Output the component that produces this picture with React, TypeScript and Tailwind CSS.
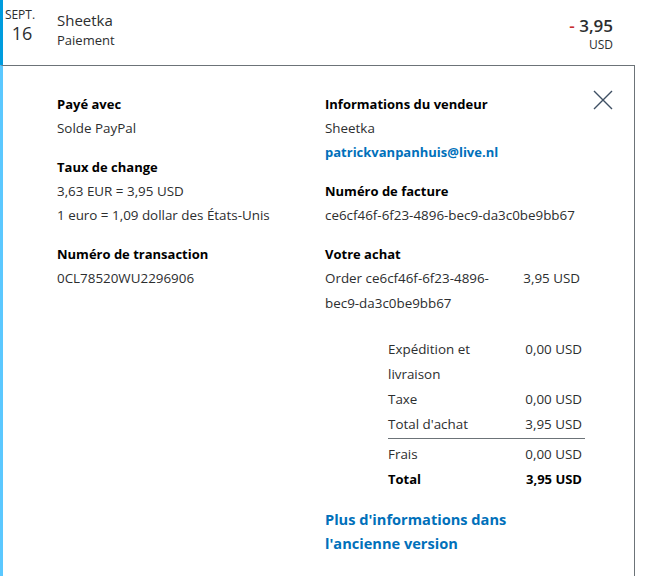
import React from 'react';

const font = { fontFamily: '"Open Sans", "Noto Sans", "Liberation Sans", sans-serif' };

function Section({ title, children }: { title: string; children: React.ReactNode }) {
  return (
    <div className="mb-[15px]">
      <p className="font-bold text-[13px] leading-[24px] text-[#000]">{title}</p>
      {children}
    </div>
  );
}

function Line({ children, className = '' }: { children: React.ReactNode; className?: string }) {
  return <p className={`text-[13.4px] leading-[24px] text-[#2c2e2f] ${className}`}>{children}</p>;
}

const breakdown = [
  { label: 'Expédition et livraison', amount: '0,00 USD' },
  { label: 'Taxe', amount: '0,00 USD' },
];

export default function App() {
  return (
    <div className="w-[646px] min-h-[576px] bg-white" style={font}>
      {/* Transaction row */}
      <div className="flex h-[65px] border-l-[3px] border-[#009cde]">
        <div className="w-[54px] flex flex-col items-center pt-[7px]">
          <span className="text-[12px] leading-[16px] text-[#2c2e2f] -ml-[20px]">SEPT.</span>
          <span className="text-[18px] leading-[20px] font-medium text-[#2c2e2f] -ml-[16px]">16</span>
        </div>
        <div className="flex-1 pt-[9px]">
          <p className="text-[15px] leading-[22px] text-[#2c2e2f]">Sheetka</p>
          <p className="text-[13px] leading-[18px] text-[#2c2e2f]">Paiement</p>
        </div>
        <div className="pr-[33px] pt-[17px] flex flex-col items-end">
          <p className="text-[17px] leading-[17px] font-semibold text-[#2c2e2f]">
            <span className="text-[#c72e2e]">-</span> 3,95
          </p>
          <p className="text-[12px] leading-[14px] mt-[4px] text-[#2c2e2f]">USD</p>
        </div>
      </div>

      {/* Details panel */}
      <div className="relative w-[635px] min-h-[511px] border-l-[3px] border-l-[#5bc8ff] border-t border-t-[#6c7378] border-r border-r-[#6c7378] pl-[54px] pt-[26px]">
        <button className="absolute right-[21px] top-[24px] w-[20px] h-[20px]">
          <svg viewBox="0 0 20 20" className="w-[20px] h-[20px]">
            <path d="M1 1 L19 19 M19 1 L1 19" stroke="#3e4f63" strokeWidth="1.4" fill="none" />
          </svg>
        </button>
        <div className="flex">
          <div className="w-[268px]">
            <Section title="Payé avec">
              <Line>Solde PayPal</Line>
            </Section>
            <Section title="Taux de change">
              <Line>3,63 EUR = 3,95 USD</Line>
              <Line>1 euro = 1,09 dollar des États-Unis</Line>
            </Section>
            <Section title="Numéro de transaction">
              <Line>0CL78520WU2296906</Line>
            </Section>
          </div>
          <div className="flex-1">
            <Section title="Informations du vendeur">
              <Line>Sheetka</Line>
              <p className="text-[13px] leading-[24px] font-bold text-[#0070ba]">patrickvanpanhuis@live.nl</p>
            </Section>
            <Section title="Numéro de facture">
              <Line>ce6cf46f-6f23-4896-bec9-da3c0be9bb67</Line>
            </Section>
            <div>
              <p className="font-bold text-[13px] leading-[24px] text-[#000]">Votre achat</p>
              <div className="flex w-[255px] text-[13.4px] leading-[25px] text-[#2c2e2f]">
                <span className="w-[185px] break-words">Order ce6cf46f-6f23-4896-bec9-da3c0be9bb67</span>
                <span className="flex-1 text-right">3,95 USD</span>
              </div>
            </div>

            <div className="ml-[63px] w-[197px] mt-[21px] text-[13.4px] leading-[25px] text-[#2c2e2f]">
              {breakdown.map((row) => (
                <div key={row.label} className="flex">
                  <span className="w-[125px]">{row.label}</span>
                  <span className="flex-1 text-right pr-[3px]">{row.amount}</span>
                </div>
              ))}
              <div className="flex border-b border-[#6c7378] pb-[1px]">
                <span className="w-[125px]">Total d'achat</span>
                <span className="flex-1 text-right pr-[3px]">3,95 USD</span>
              </div>
              <div className="flex mt-[3px]">
                <span className="w-[125px]">Frais</span>
                <span className="flex-1 text-right pr-[3px]">0,00 USD</span>
              </div>
              <div className="flex font-bold text-[13px] text-[#000]">
                <span className="w-[125px]">Total</span>
                <span className="flex-1 text-right pr-[3px]">3,95 USD</span>
              </div>
            </div>

            <a className="block mt-[15px] w-[200px] text-[14.6px] leading-[24px] font-bold text-[#0070ba]">
              Plus d'informations dans l'ancienne version
            </a>
          </div>
        </div>
      </div>
    </div>
  );
}
